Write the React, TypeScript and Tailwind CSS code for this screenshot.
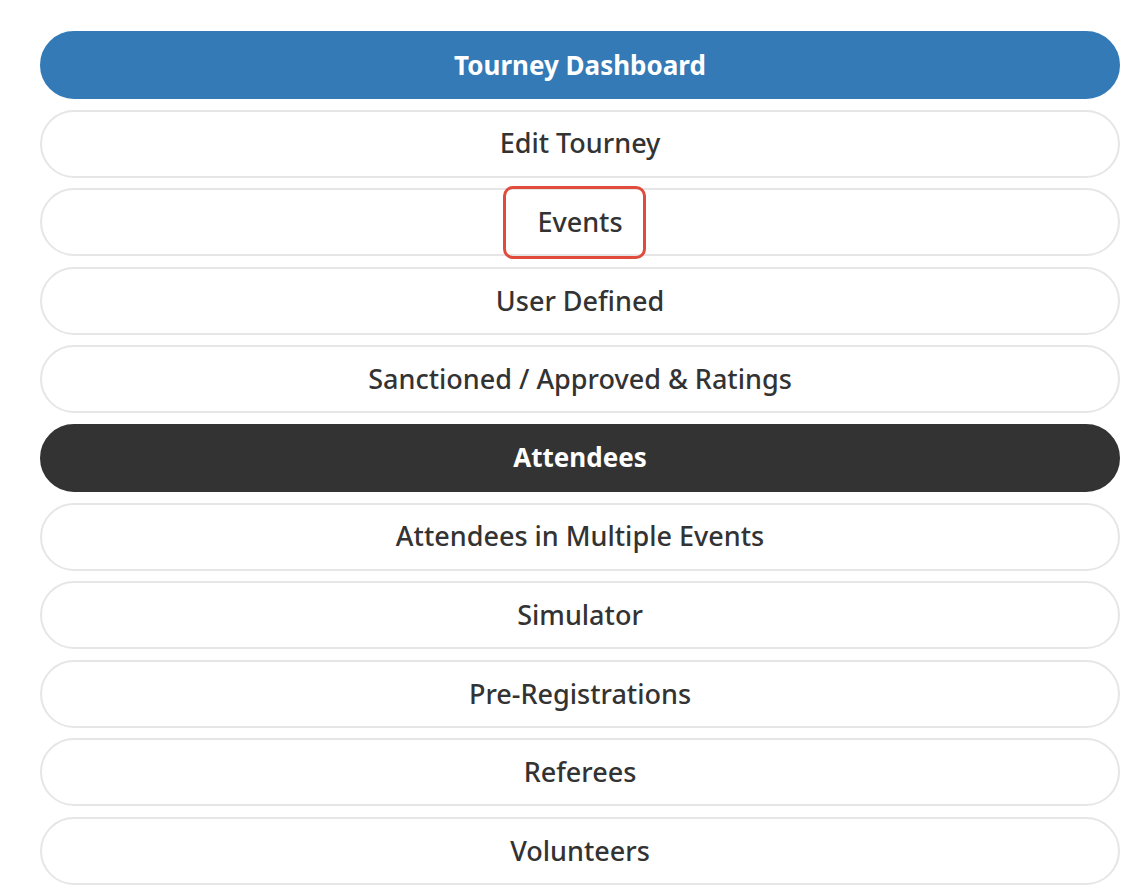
const items = [
  { label: "Tourney Dashboard", variant: "primary" },
  { label: "Edit Tourney" },
  { label: "Events", highlight: true },
  { label: "User Defined" },
  { label: "Sanctioned / Approved & Ratings" },
  { label: "Attendees", variant: "dark" },
  { label: "Attendees in Multiple Events" },
  { label: "Simulator" },
  { label: "Pre-Registrations" },
  { label: "Referees" },
  { label: "Volunteers" },
];

const variants: Record<string, string> = {
  primary: "bg-[#337ab7] text-white font-bold text-[26px] border-[#337ab7]",
  dark: "bg-[#333333] text-white font-bold text-[26px] border-[#333333]",
  default: "bg-white text-[#333333] font-medium text-[27px] border-[#e6e6e6]",
};

export default function App() {
  return (
    <div
      className="min-h-[896px] bg-white px-[40px] pt-[31px] pr-[21px]"
      style={{ fontFamily: '"Noto Sans", "Open Sans", sans-serif' }}
    >
      <div className="flex flex-col gap-[10.6px]">
        {items.map((item) => (
          <button
            key={item.label}
            className={`relative flex h-[68px] w-full items-center justify-center rounded-full border-2 ${
              variants[item.variant ?? "default"]
            }`}
          >
            {item.label}
            {item.highlight && (
              <span className="absolute left-[calc(50%-77px)] top-[-4px] h-[73px] w-[143px] rounded-[10px] border-[3px] border-[#e04b3b]" />
            )}
          </button>
        ))}
      </div>
    </div>
  );
}
